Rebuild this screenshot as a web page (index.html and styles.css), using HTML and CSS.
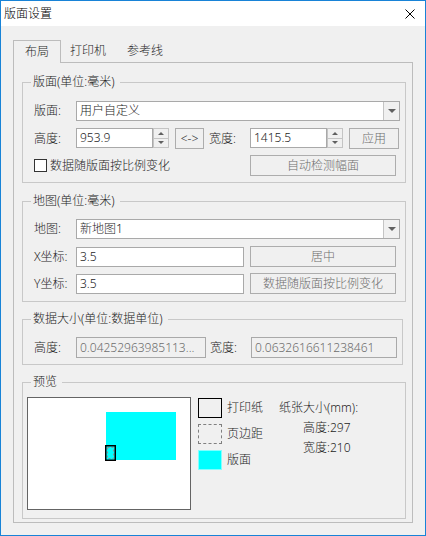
FILE: index.html
```html
<!DOCTYPE html>
<html lang="zh-CN">
<head>
    <meta charset="UTF-8">
    <title>版面设置</title>
    <link rel="stylesheet" href="styles.css">
</head>
<body>
<div class="window">
    <div class="titlebar">
        <span class="title">版面设置</span>
        <span class="close">
            <svg width="10" height="10" viewBox="0 0 10 10"><path d="M0.5 0.5L9.5 9.5M9.5 0.5L0.5 9.5" stroke="#000" stroke-width="1" fill="none"/></svg>
        </span>
    </div>
    <div class="client">
        <div class="tabs">
            <span class="tab on">布局</span>
            <span class="tab">打印机</span>
            <span class="tab">参考线</span>
        </div>
        <div class="panel">
            <!-- 版面 -->
            <div class="group g1">
                <div class="gtitle">版面(单位:毫米)</div>
                <div class="gbody">
                    <div class="row r1">
                        <span class="lbl">版面:</span>
                        <div class="combo"><span class="combo-text">用户自定义</span><span class="combo-btn"><i class="tri-down"></i></span></div>
                    </div>
                    <div class="row r2">
                        <span class="lbl">高度:</span>
                        <div class="spin">
                            <span class="spin-input">953.9</span>
                            <span class="spin-btns"><span class="half"><i class="tri-up"></i></span><span class="half"><i class="tri-down small"></i></span></span>
                        </div>
                        <button class="btn swap">&lt;-&gt;</button>
                        <span class="lbl lbl2">宽度:</span>
                        <div class="spin">
                            <span class="spin-input">1415.5</span>
                            <span class="spin-btns"><span class="half"><i class="tri-up"></i></span><span class="half"><i class="tri-down small"></i></span></span>
                        </div>
                        <button class="btn apply" disabled>应用</button>
                    </div>
                    <div class="row r3">
                        <label class="check"><span class="checkbox"></span>数据随版面按比例变化</label>
                        <button class="btn wide" disabled>自动检测幅面</button>
                    </div>
                </div>
            </div>

            <!-- 地图 -->
            <div class="group g2">
                <div class="gtitle">地图(单位:毫米)</div>
                <div class="gbody">
                    <div class="row r1">
                        <span class="lbl">地图:</span>
                        <div class="combo"><span class="combo-text">新地图1</span><span class="combo-btn"><i class="tri-down"></i></span></div>
                    </div>
                    <div class="row r2">
                        <span class="lbl">X坐标:</span>
                        <span class="textbox long">3.5</span>
                        <button class="btn wide" disabled>居中</button>
                    </div>
                    <div class="row r3">
                        <span class="lbl">Y坐标:</span>
                        <span class="textbox long">3.5</span>
                        <button class="btn wide" disabled>数据随版面按比例变化</button>
                    </div>
                </div>
            </div>

            <!-- 数据大小 -->
            <div class="group g3">
                <div class="gtitle">数据大小(单位:数据单位)</div>
                <div class="gbody">
                    <div class="row r1">
                        <span class="lbl">高度:</span>
                        <span class="textbox off short">0.04252963985113...</span>
                        <span class="lbl lbl3">宽度:</span>
                        <span class="textbox off mid">0.0632616611238461</span>
                    </div>
                </div>
            </div>

            <!-- 预览 -->
            <div class="group g4">
                <div class="gtitle">预览</div>
                <div class="preview">
                    <div class="canvas">
                        <svg width="162" height="111" viewBox="0 0 162 111">
                            <rect x="78" y="14" width="70" height="48" fill="#00ffff"/>
                            <rect x="77.75" y="47.75" width="9.5" height="14.5" fill="#00ffff" stroke="#000" stroke-width="1.5"/>
                            <rect x="79.5" y="49.5" width="6" height="11" fill="none" stroke="#909090" stroke-width="1" stroke-dasharray="2 2"/>
                        </svg>
                    </div>
                    <div class="legend">
                        <div class="item"><span class="swatch paper"></span>打印纸</div>
                        <div class="item"><span class="swatch margin"></span>页边距</div>
                        <div class="item"><span class="swatch page"></span>版面</div>
                    </div>
                    <div class="info">
                        <div>纸张大小(mm):</div>
                        <div class="sub">高度:297</div>
                        <div class="sub">宽度:210</div>
                    </div>
                </div>
            </div>
        </div>
    </div>
</div>
</body>
</html>
```

FILE: styles.css
```css
*{
    margin: 0;
    padding: 0;
    box-sizing: border-box;
}
body{
    font: 300 12px/16px "Noto Sans", "Noto Sans CJK SC", sans-serif;
    color: #1e1e1e;
    background: #fff;
}
.window{
    width: 426px;
    height: 536px;
    border: 1px solid #1883d7;
    display: flex;
    flex-direction: column;
}
.titlebar{
    height: 25px;
    flex: none;
    background: #fff;
    display: flex;
    align-items: center;
    padding: 0 10px 0 3px;
    color: #000;
}
.title{
    flex: 1;
}
.close{
    width: 10px;
    height: 10px;
    display: flex;
}
.client{
    flex: 1;
    background: #f0f0f0;
    padding-top: 14px;
}

/* tabs */
.tabs{
    display: flex;
    padding-left: 12px;
    height: 22px;
}
.tab{
    line-height: 22px;
    padding: 0 10px;
    color: #1e1e1e;
}
.tab + .tab + .tab{
    padding-left: 11px;
}
.tab.on{
    position: relative;
    z-index: 2;
    height: 23px;
    padding: 0 11px;
    border: 1px solid #bcbcbc;
    border-bottom: none;
    background: #f0f0f0;
    line-height: 21px;
    margin-right: -1px;
}
.panel{
    margin: 0 12px;
    height: 461px;
    border: 1px solid #bcbcbc;
    padding: 0 6px 0 8px;
}

/* group boxes */
.group{
    border: 1px solid #c8c8c8;
}
.g1{ margin-top: 19px; height: 101px; }
.g2{ margin-top: 18px; height: 101px; }
.g3{ margin-top: 17px; height: 46px; margin-right: 3px; }
.g4{ margin-top: 17px; height: 137px; }
.gtitle{
    width: fit-content;
    margin: -9px 0 0 8px;
    padding: 0 5px 0 2px;
    height: 16px;
    line-height: 16px;
    background: #f0f0f0;
    color: #222;
}
.gbody{
    padding: 0 5px 0 11px;
}
.row{
    display: flex;
    align-items: center;
}
.r1{ margin-top: 11px; height: 20px; }
.r2{ margin-top: 7px; height: 21px; }
.r3{ margin-top: 6px; height: 21px; }
.g2 .r1, .g3 .r1{ margin-top: 10px; }
.g3 .r1{ height: 21px; }
.lbl{
    width: 42px;
    flex: none;
    white-space: nowrap;
}
.lbl2{ width: 41px; margin-left: 5px; }
.lbl3{ width: 41px; margin-left: 4px; }

/* combo */
.combo{
    flex: 1;
    height: 20px;
    border: 1px solid #a9a9a9;
    background: #fff;
    display: flex;
}
.combo-text{
    flex: 1;
    padding-left: 3px;
    line-height: 18px;
}
.combo-btn{
    width: 16px;
    border-left: 1px solid #c4c4c4;
    background: #f0f0f0;
    display: flex;
    align-items: center;
    justify-content: center;
}
.tri-down{
    width: 0;
    height: 0;
    border-left: 4px solid transparent;
    border-right: 4px solid transparent;
    border-top: 4px solid #606060;
}
.tri-down.small, .tri-up{
    border-left-width: 3px;
    border-right-width: 3px;
}
.tri-down.small{ border-top-width: 3px; }
.tri-up{
    width: 0;
    height: 0;
    border-left: 3px solid transparent;
    border-right: 3px solid transparent;
    border-bottom: 3px solid #606060;
}

/* spin box */
.spin{
    display: flex;
    height: 20px;
    align-self: flex-start;
}
.spin-input{
    width: 77px;
    border: 1px solid #a9a9a9;
    background: #fff;
    padding-left: 3px;
    line-height: 18px;
}
.spin-btns{
    width: 16px;
    border: 1px solid #c4c4c4;
    display: flex;
    flex-direction: column;
}
.half{
    flex: 1;
    display: flex;
    align-items: center;
    justify-content: center;
    background: #f0f0f0;
}
.half + .half{
    border-top: 1px solid #c4c4c4;
}

/* buttons */
.btn{
    height: 21px;
    font: inherit;
    border: 1px solid #adadad;
    background: #f0f0f0;
    color: #6d6d6d;
    line-height: 19px;
}
.swap{
    width: 29px;
    margin-left: 6px;
    color: #333;
}
.apply{
    width: 50px;
    margin-left: 6px;
}
.wide{
    width: 146px;
    margin-left: auto;
    margin-right: 4px;
}

/* checkbox */
.check{
    display: flex;
    align-items: center;
}
.checkbox{
    width: 13px;
    height: 13px;
    border: 1px solid #333;
    background: #fff;
    margin-right: 3px;
}

/* text boxes */
.textbox{
    height: 20px;
    border: 1px solid #a9a9a9;
    background: #fff;
    padding-left: 3px;
    line-height: 18px;
    white-space: nowrap;
    overflow: hidden;
}
.textbox.long{ width: 168px; }
.textbox.off{
    height: 21px;
    line-height: 19px;
    background: #f0f0f0;
    color: #6d6d6d;
}
.textbox.short{ width: 130px; }
.textbox.mid{ width: 146px; }

/* preview */
.preview{
    display: flex;
    align-items: flex-start;
    padding-left: 4px;
    margin-top: 7px;
}
.canvas{
    width: 164px;
    height: 113px;
    border: 1px solid #646464;
    background: #fff;
}
.canvas svg{
    display: block;
}
.legend{
    margin: 1px 0 0 7px;
    display: flex;
    flex-direction: column;
    gap: 6px;
}
.item{
    display: flex;
    align-items: center;
    height: 20px;
}
.swatch{
    width: 24px;
    height: 20px;
    margin-right: 5px;
}
.paper{ border: 1px solid #000; }
.margin{ border: 1px dashed #808080; }
.page{ background: #00ffff; border: 1px solid #80ffff; }
.info{
    margin: 1px 0 0 16px;
    line-height: 20px;
}
.info .sub{
    padding-left: 24px;
}
```
